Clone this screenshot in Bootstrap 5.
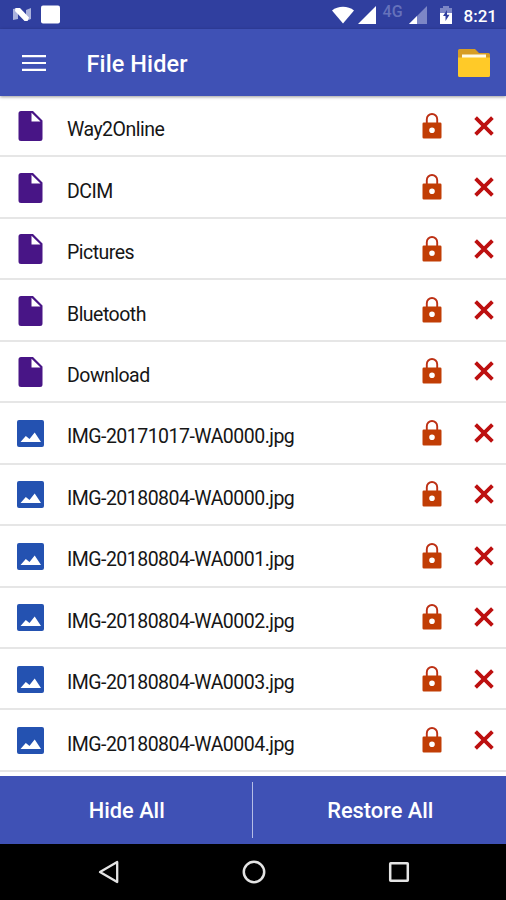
<!DOCTYPE html>
<html lang="en">
<head>
<meta charset="utf-8">
<meta name="viewport" content="width=device-width, initial-scale=1">
<title>File Hider</title>
<link href="https://cdn.jsdelivr.net/npm/bootstrap@5.3.0/dist/css/bootstrap.min.css" rel="stylesheet">
<style>
  body { font-family: Roboto, "Liberation Sans", sans-serif; }
  svg { display: block; flex: none; }
  .screen { height: 900px; width: 506px; background: #fff; }
  .status-bar { height: 29px; background: #303f9f; padding: 0 9px 0 12px; }
  .status-bar .network { font-size: 16px; font-weight: 500; line-height: 15px; color: #6672bb; margin: -6px 6px 0 7px; }
  .status-bar .clock { font-size: 17px; font-weight: 500; line-height: 20px; margin-left: 12px; padding-top: 2px; }
  .charge { margin-left: 13px; }
  .app-bar { height: 67px; background: #3f51b5; padding: 0 16px 0 22px; box-shadow: 0 1px 3px rgba(0,0,0,.4); z-index: 1; }
  .app-title { font-size: 23.5px; font-weight: 500; line-height: 28px; margin-left: 40.5px; padding-top: 2px; letter-spacing: .1px; }
  .file-list { height: 680px; }
  .file-row { height: 61.45px; flex: none; border-bottom: 2px solid #e6e6e6; padding: 0 12.5px 0 17px; }
  .file-name { font-size: 19.5px; line-height: 24px; color: #161616; margin-left: 23px; padding-top: 9px; letter-spacing: -.52px; }
  .type-icon { margin-top: 1px; }
  .lock-icon { margin-right: 31.5px; }
  .action-bar { height: 68px; background: #3f51b5; padding: 6px 0; }
  .action-bar .btn { font-size: 21.8px; font-weight: 500; line-height: 26px; color: #fff; padding: 2px 0 0 1px !important; }
  .split { width: 1px; margin: 0 1px 0 -1px; background: #b5bde6; }
  .nav-keys { height: 56px; background: #000; padding: 0 96px 0 98px; }
</style>
<script src="https://cdn.jsdelivr.net/npm/bootstrap@5.3.0/dist/js/bootstrap.bundle.min.js"></script>
</head>
<body class="m-0 overflow-hidden">
<svg width="0" height="0" class="position-absolute" aria-hidden="true">
  <symbol id="i-doc" viewBox="0 0 27 30"><path fill="#481586" fill-rule="evenodd" d="M4 0h12l9.500 9.500V27.500a2.500 2.500 0 0 1-2.500 2.500H4a2.500 2.500 0 0 1-2.500-2.500V2.500A2.500 2.500 0 0 1 4 0zM14.500 1.800v8.700h9z"/></symbol>
  <symbol id="i-img" viewBox="0 0 27 27"><rect width="27" height="27" rx="2" fill="#2452b1"/><path fill="#fff" d="M3.500 22L8.800 16l3.700 3 5.200-6.600L24 22z"/></symbol>
  <symbol id="i-lock" viewBox="0 0 20 26"><path fill="none" stroke="#bd3014" stroke-width="1.900" d="M4.800 10V6.200a5.200 5.200 0 0 1 10.400 0V10"/><path fill="#c13d05" fill-rule="evenodd" d="M1.800 9.500h16.400a1.300 1.300 0 0 1 1.300 1.300v13.400a1.300 1.300 0 0 1-1.300 1.300H1.800A1.300 1.300 0 0 1 .5 24.200V10.800A1.300 1.300 0 0 1 1.800 9.500zm8.200 5a2.800 2.800 0 1 0 0 5.600 2.800 2.800 0 0 0 0-5.600z"/></symbol>
  <symbol id="i-x" viewBox="0 0 20 20"><path stroke="#bd1010" stroke-width="3.800" d="M1.600 1.600l16.800 16.800M18.400 1.600L1.600 18.400"/></symbol>
</svg>
<main class="screen d-flex flex-column overflow-hidden">
  <div class="status-bar d-flex align-items-center flex-shrink-0 text-white">
    <svg width="20" height="15" viewBox="0 0 20 15"><path fill="#aab2dc" d="M1 2l5-1v11l-5 1zM14 3l5-2v11l-5 2z"/><path fill="#fff" d="M3.500 1h4.500l9 9.500-1.500 3.500h-3L3 4z"/></svg>
    <svg class="ms-2 me-auto" width="20" height="19" viewBox="0 0 20 19"><rect x="1" y=".5" width="19" height="18" rx="2" fill="#fff"/></svg>
    <svg width="22" height="18" viewBox="0 0 22 18"><path fill="#fff" d="M0 4.500C6-.5 16-.5 22 4.500L11 17.500z"/></svg>
    <svg class="ms-1" width="18" height="18" viewBox="0 0 18 18"><path fill="#fff" d="M18 0v18H0z"/></svg>
    <span class="network">4G</span>
    <svg width="18" height="18" viewBox="0 0 18 18"><path fill="#7c86c6" d="M18 0v18H0z"/><path fill="#fff" d="M8 10v8H0z"/></svg>
    <svg class="charge" width="12" height="18" viewBox="0 0 12 18"><path fill="#7c86c6" d="M3 0h6v2h3v6H0V2h3z"/><path fill="#fff" d="M0 7h12v11H0z"/><path fill="#303f9f" d="M7 4L3 10h2.500v5L9.500 8.800H7z"/></svg>
    <span class="clock">8:21</span>
  </div>
  <header class="app-bar d-flex align-items-center flex-shrink-0 position-relative text-white">
    <svg width="24" height="16" viewBox="0 0 24 16"><path stroke="#fff" stroke-width="2.200" d="M0 1.200h24M0 8h24M0 14.800h24"/></svg>
    <h1 class="app-title mb-0">File Hider</h1>
    <svg class="ms-auto" width="32" height="28" viewBox="0 0 32 28"><path fill="#d79d24" d="M1.500 0H17l4 4h9.500A1.500 1.500 0 0 1 32 5.500V15H0V1.500A1.500 1.500 0 0 1 1.500 0z"/><path fill="#fffbe8" d="M4 5.500h24V10H4z"/><path fill="#ffca28" d="M0 8.500h32v18a1.500 1.500 0 0 1-1.500 1.500h-29A1.500 1.500 0 0 1 0 26.500z"/></svg>
  </header>
  <section class="file-list d-flex flex-column flex-shrink-0 overflow-hidden" id="files"></section>
  <div class="action-bar d-flex flex-shrink-0">
    <button class="btn border-0 rounded-0 flex-fill w-50">Hide All</button>
    <div class="split flex-shrink-0"></div>
    <button class="btn border-0 rounded-0 flex-fill w-50">Restore All</button>
  </div>
  <nav class="nav-keys d-flex align-items-center justify-content-between flex-shrink-0">
    <svg width="22" height="24" viewBox="0 0 22 24"><path fill="none" stroke="#e4e4e4" stroke-width="2.300" stroke-linejoin="round" d="M19.200 2v20L2 12z"/></svg>
    <svg width="24" height="24" viewBox="0 0 24 24"><circle cx="12" cy="12" r="10.200" fill="none" stroke="#e4e4e4" stroke-width="2.500"/></svg>
    <svg width="22" height="22" viewBox="0 0 22 22"><rect x="2.200" y="2.200" width="17.600" height="17.600" rx=".5" fill="none" stroke="#e4e4e4" stroke-width="2.500"/></svg>
  </nav>
</main>
<script>
  const folders = ["Way2Online", "DCIM", "Pictures", "Bluetooth", "Download"];
  const images = ["IMG-20171017-WA0000.jpg", "IMG-20180804-WA0000.jpg", "IMG-20180804-WA0001.jpg",
    "IMG-20180804-WA0002.jpg", "IMG-20180804-WA0003.jpg", "IMG-20180804-WA0004.jpg"];
  const row = (name, icon, h) => `
    <div class="file-row d-flex align-items-center">
      <svg class="type-icon" width="27" height="${h}"><use href="#${icon}"/></svg>
      <span class="file-name me-auto">${name}</span>
      <svg class="lock-icon" width="20" height="26"><use href="#i-lock"/></svg>
      <svg width="20" height="20"><use href="#i-x"/></svg>
    </div>`;
  document.getElementById("files").innerHTML =
    folders.map(n => row(n, "i-doc", 30)).join("") + images.map(n => row(n, "i-img", 27)).join("");
</script>
</body>
</html>
